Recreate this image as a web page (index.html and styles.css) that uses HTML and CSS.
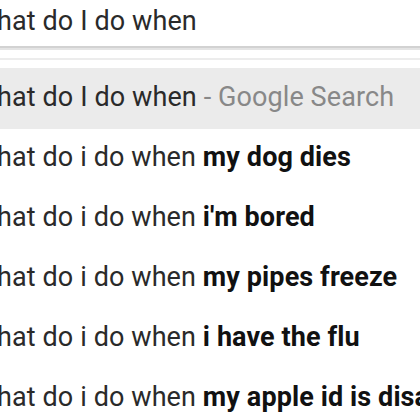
FILE: index.html
```html
<!DOCTYPE html>
<html lang="en">
<head>
    <meta charset="UTF-8">
    <title>Omnibox</title>
    <link rel="stylesheet" href="styles.css">
</head>
<body>
    <div class="omnibox">
        <div class="input-row"><span class="text">What do I do when</span></div>
    </div>
    <div class="divider"></div>
    <ul class="suggestions">
        <li class="selected"><span class="text">What do I do when <span class="hint">- Google Search</span></span></li>
        <li><span class="text">What do i do when <b>my dog dies</b></span></li>
        <li><span class="text">What do i do when <b>i'm bored</b></span></li>
        <li><span class="text">What do i do when <b>my pipes freeze</b></span></li>
        <li><span class="text">What do i do when <b>i have the flu</b></span></li>
        <li><span class="text">What do i do when <b>my apple id is disabled</b></span></li>
    </ul>
</body>
</html>
```

FILE: styles.css
```css
body {
    margin: 0;
    width: 420px;
    height: 420px;
    overflow: hidden;
    background: #fff;
    font-family: Roboto, "Liberation Sans", sans-serif;
    font-size: 27px;
    letter-spacing: 0.1px;
    color: #2a2a2a;
}
.text {
    display: block;
    margin-left: -27px;
    white-space: nowrap;
}
.input-row {
    height: 46px;
    display: flex;
    align-items: center;
    padding-bottom: 5px;
    box-sizing: border-box;
}
.divider {
    height: 2px;
    border-top: 2px solid #d2d2d2;
    margin-bottom: 4px;
    background: #e4e4e4;
    border-bottom: 4px solid #fff;
}
.divider + .suggestions {
    border-top: 2px solid #ececec;
    padding-top: 8px;
}
.suggestions {
    list-style: none;
    margin: 0;
    padding: 0;
}
.suggestions li {
    height: 60px;
    display: flex;
    align-items: center;
    padding-bottom: 4px;
    box-sizing: border-box;
}
.suggestions li.selected {
    height: 61px;
    background: #ebebeb;
}
.suggestions b {
    font-weight: bold;
    color: #111;
}
.hint {
    color: #888;
}
```
